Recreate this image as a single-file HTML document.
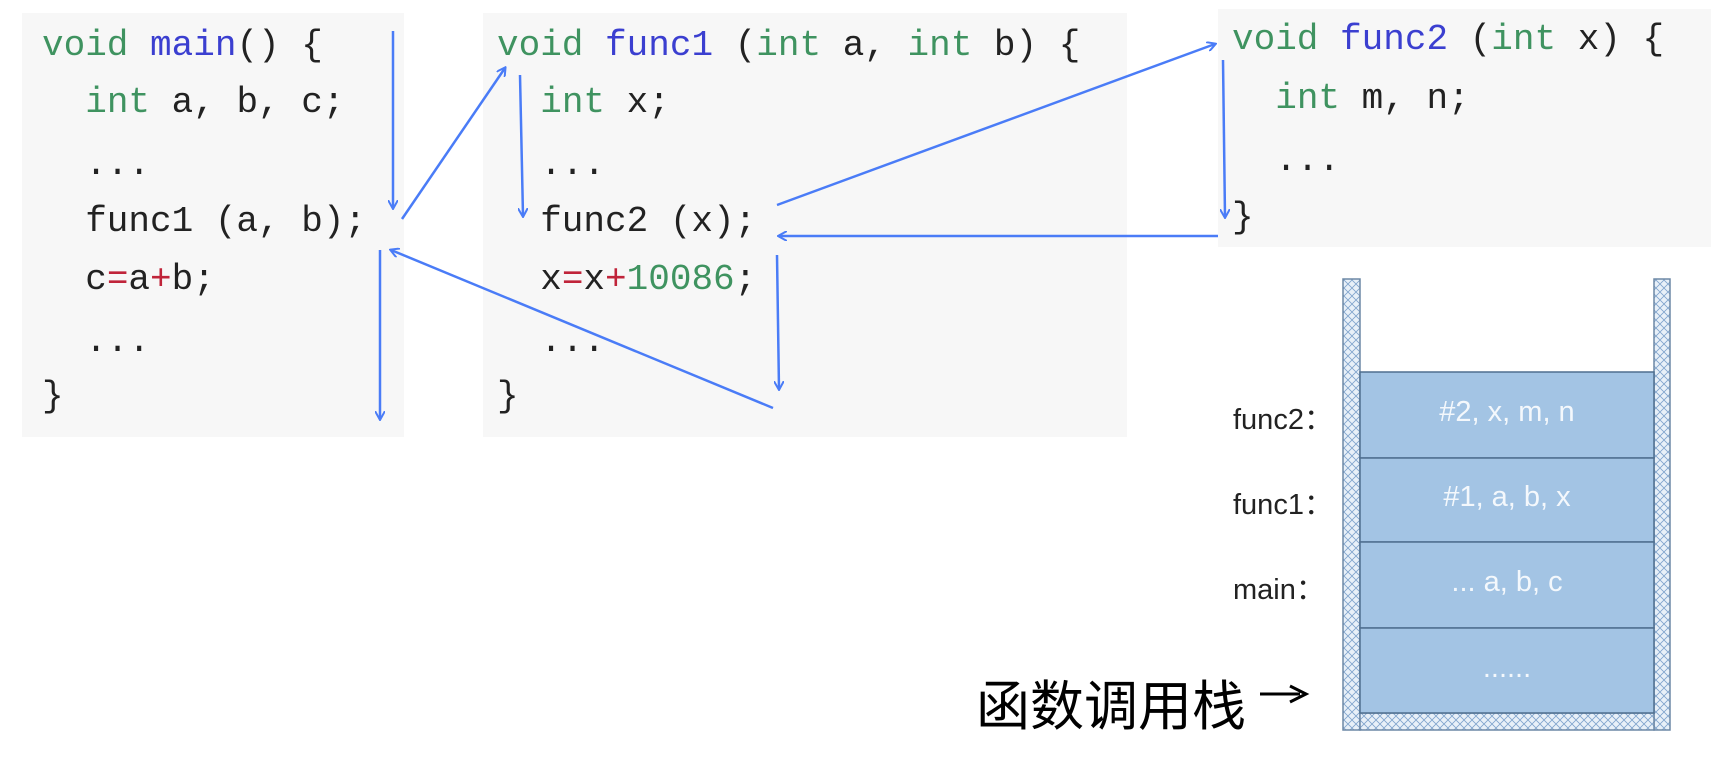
<!DOCTYPE html>
<html><head><meta charset="utf-8"><style>
body{margin:0;width:1720px;height:758px;background:#fff;position:relative;overflow:hidden;font-family:"Liberation Mono",monospace}
.p{position:absolute;background:#f7f7f7}
.l{position:absolute;font-size:36px;color:#222;white-space:pre;line-height:40px}
.g{color:#3f9360}.b{color:#3b3fd0}.r{color:#c0243a}
.s{position:absolute;font-family:"Liberation Sans","Noto Sans CJK SC",sans-serif}
</style></head><body>
<div class="p" style="left:22px;top:13px;width:382px;height:424px"></div>
<div class="p" style="left:483px;top:13px;width:644px;height:424px"></div>
<div class="p" style="left:1218px;top:9px;width:493px;height:238px"></div>

<div class="l" style="left:42px;top:26px"><span class="g">void</span> <span class="b">main</span>() {</div>
<div class="l" style="left:42px;top:83px">  <span class="g">int</span> a, b, c;</div>
<div class="l" style="left:42px;top:145px">  ...</div>
<div class="l" style="left:42px;top:202px">  func1 (a, b);</div>
<div class="l" style="left:42px;top:260px">  c<span class="r">=</span>a<span class="r">+</span>b;</div>
<div class="l" style="left:42px;top:322px">  ...</div>
<div class="l" style="left:42px;top:377px">}</div>

<div class="l" style="left:497px;top:26px"><span class="g">void</span> <span class="b">func1</span> (<span class="g">int</span> a, <span class="g">int</span> b) {</div>
<div class="l" style="left:497px;top:83px">  <span class="g">int</span> x;</div>
<div class="l" style="left:497px;top:145px">  ...</div>
<div class="l" style="left:497px;top:202px">  func2 (x);</div>
<div class="l" style="left:497px;top:260px">  x<span class="r">=</span>x<span class="r">+</span><span class="g">10086</span>;</div>
<div class="l" style="left:497px;top:322px">  ...</div>
<div class="l" style="left:497px;top:377px">}</div>

<div class="l" style="left:1232px;top:20px"><span class="g">void</span> <span class="b">func2</span> (<span class="g">int</span> x) {</div>
<div class="l" style="left:1232px;top:79px">  <span class="g">int</span> m, n;</div>
<div class="l" style="left:1232px;top:141px">  ...</div>
<div class="l" style="left:1232px;top:198px">}</div>

<svg width="1720" height="758" style="position:absolute;left:0;top:0">
<defs>
<marker id="a" markerWidth="10" markerHeight="10" refX="8" refY="5" orient="auto" markerUnits="userSpaceOnUse"><path d="M0,0 L9,5 L0,10" fill="none" stroke="#4a7cf7" stroke-width="2"/></marker>
<pattern id="h" width="8" height="8" patternUnits="userSpaceOnUse"><rect width="8" height="8" fill="#e8f0f8"/><path d="M0,0L8,8M8,0L0,8" stroke="#7fa3cc" stroke-width="0.8"/></pattern>
</defs>
<g stroke="#4a7cf7" stroke-width="2.5" fill="none" marker-end="url(#a)">
<line x1="393" y1="31" x2="393" y2="208"/>
<line x1="402" y1="219" x2="505" y2="68"/>
<line x1="520" y1="75" x2="523" y2="216"/>
<line x1="777" y1="205" x2="1215" y2="44"/>
<line x1="1223" y1="60" x2="1225" y2="217"/>
<line x1="1218" y1="236" x2="779" y2="236"/>
<line x1="777" y1="255" x2="779" y2="389"/>
<line x1="773" y1="408" x2="391" y2="250"/>
<line x1="380" y1="250" x2="380" y2="419"/>
</g>
<rect x="1343" y="279" width="17" height="451" fill="url(#h)" stroke="#6d88a6" stroke-width="1.5"/>
<rect x="1654" y="279" width="16" height="451" fill="url(#h)" stroke="#6d88a6" stroke-width="1.5"/>
<rect x="1360" y="713" width="294" height="17" fill="url(#h)" stroke="#6d88a6" stroke-width="1.5"/>
<g fill="#a3c4e4" stroke="#4f6f8f" stroke-width="1.5">
<rect x="1360" y="372" width="294" height="86"/>
<rect x="1360" y="458" width="294" height="84"/>
<rect x="1360" y="542" width="294" height="86"/>
<rect x="1360" y="628" width="294" height="85"/>
</g>
<line x1="1260" y1="694" x2="1300" y2="694" stroke="#000" stroke-width="3"/>
<path d="M1290,686 L1306,694 L1290,702" fill="none" stroke="#000" stroke-width="3"/>
</svg>
<div class="s" style="left:1360px;top:396px;width:294px;text-align:center;color:#f4f8fc;font-size:29px">#2, x, m, n</div>
<div class="s" style="left:1360px;top:481px;width:294px;text-align:center;color:#f4f8fc;font-size:29px">#1, a, b, x</div>
<div class="s" style="left:1360px;top:566px;width:294px;text-align:center;color:#f4f8fc;font-size:29px">... a, b, c</div>
<div class="s" style="left:1360px;top:652px;width:294px;text-align:center;color:#f4f8fc;font-size:29px">......</div>
<div class="s" style="left:1233px;top:396px;font-size:29px;color:#222">func2：</div>
<div class="s" style="left:1233px;top:481px;font-size:29px;color:#222">func1：</div>
<div class="s" style="left:1233px;top:566px;font-size:29px;color:#222">main：</div>
<div class="s" style="left:976px;top:662px;font-size:54px;color:#000;white-space:nowrap">函数调用栈</div>
</body></html>
